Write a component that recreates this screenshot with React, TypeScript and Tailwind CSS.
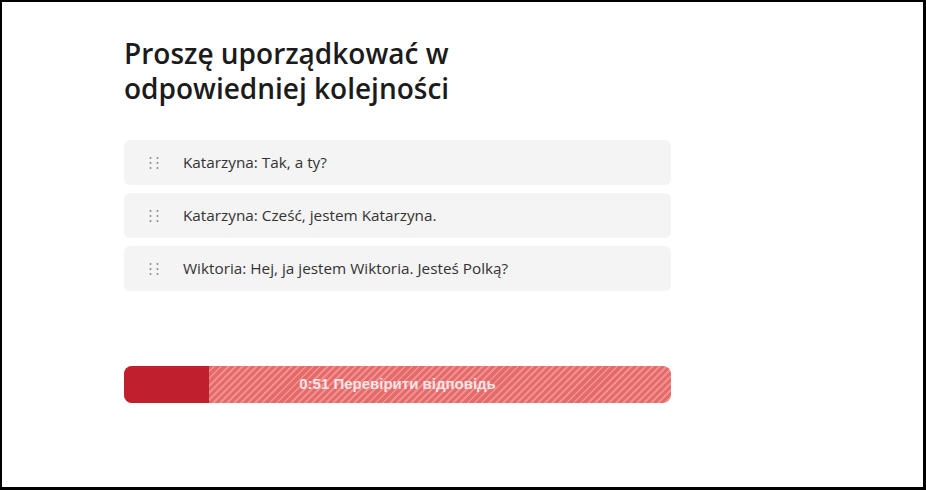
import React from 'react';

const items = [
  'Katarzyna: Tak, a ty?',
  'Katarzyna: Cześć, jestem Katarzyna.',
  'Wiktoria: Hej, ja jestem Wiktoria. Jesteś Polką?',
];

function DragDots() {
  return (
    <svg width="10" height="14" viewBox="0 0 10 14" className="shrink-0">
      {[2, 7, 12].map((y) =>
        [1.5, 8.5].map((x) => <circle key={`${x}-${y}`} cx={x} cy={y} r="1" fill="#8a8a8a" />)
      )}
    </svg>
  );
}

export default function App() {
  return (
    <div className="w-[926px] h-[490px] bg-white border-l-2 border-t-2 border-r-[3px] border-b-[3px] border-black font-['Open_Sans','Noto_Sans',sans-serif]">
      <div className="pl-[122px] pt-[34px] w-[672px]">
        <h1 className="max-w-[390px] text-[28px] leading-[35px] font-semibold text-[#1b1b1b]">
          Proszę uporządkować w odpowiedniej kolejności
        </h1>

        {/* sortable list */}
        <div className="mt-[34px] flex flex-col gap-2">
          {items.map((t) => (
            <div key={t} className="h-[45px] w-[547px] rounded-md bg-[#f4f4f4] flex items-center pl-[25px] gap-[24px]">
              <DragDots />
              <span className="text-[15.3px] text-[#333]">{t}</span>
            </div>
          ))}
        </div>

        {/* check button with timer */}
        <button className="mt-[75px] relative h-[37px] w-[547px] rounded-lg overflow-hidden flex bg-[repeating-linear-gradient(135deg,#e56a6a_0px,#e56a6a_3px,#ef8f8f_3px,#ef8f8f_5px)]">
          <div className="w-[85px] h-full bg-[#c01f2e]" />
          <span className="absolute inset-0 flex items-center justify-center text-[15px] font-bold text-[#fbe4e4] font-['Liberation_Sans',Arial,sans-serif]">
            0:51 Перевірити відповідь
          </span>
        </button>
      </div>
    </div>
  );
}
